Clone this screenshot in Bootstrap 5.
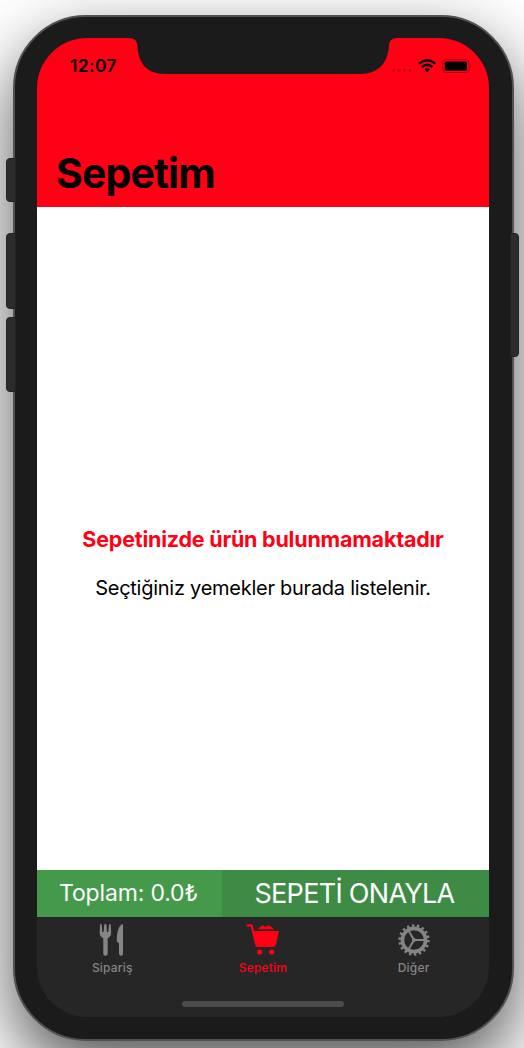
<!DOCTYPE html>
<html lang="tr">
<head>
<meta charset="utf-8">
<meta name="viewport" content="width=device-width, initial-scale=1">
<title>Sepetim</title>
<link href="https://cdn.jsdelivr.net/npm/bootstrap@5.3.0/dist/css/bootstrap.min.css" rel="stylesheet">
<style>
body{width:524px;height:1048px;background:#fff;font-family:Inter,"Liberation Sans",sans-serif;color:#000}
.phone{width:501px;height:1026px;margin:15px 0 0 13px;padding:21px 22px 21px;background:#1b1b1b;border:2px solid #505252;border-radius:73px;box-shadow:0 28px 68px rgba(0,0,0,.68)}
.side-key{position:absolute;width:10px;background:#2c2c2c;border:1px solid #222;border-radius:4px 0 0 4px;left:6px}
.side-key.power{left:510px;width:9px;border-radius:0 4px 4px 0}
.screen{width:452px;height:979px;border-radius:50px}
.top-area{height:169px;background:#ff0015}
.notch{position:absolute;left:90px;top:0}
.status{height:56px;padding:0 18px 0 33px}
.clock{font-size:17.500px;font-weight:600;line-height:20px;letter-spacing:.35px}
.title-lg{font-size:41px;font-weight:700;line-height:48px;letter-spacing:-.9px;margin:55px 0 0 19px}
.empty-area{padding-top:48px}
.empty-title{font-size:21.500px;font-weight:700;line-height:26px;letter-spacing:-.22px;color:#ff0015}
.empty-text{font-size:20px;line-height:24px;letter-spacing:-.26px}
.pay{height:47px;color:#fff}
.total{width:185px;background:#449a4a;font-size:23px;letter-spacing:-.15px;padding-right:2px}
.confirm{background:#3e8b45;font-size:27px;letter-spacing:-.7px;padding:1px 2px 0 0}
.tabs{height:100px;background:#262626;color:#858585}
.tab-label{font-size:12px;font-weight:500;line-height:14px;letter-spacing:.2px}
.tab-on{color:#ff0015}
.home-bar{width:162px;height:6px;border-radius:3px;background:#4b4b4b;margin-bottom:10px}
span,div{white-space:nowrap}
</style>
</head>
<body class="position-relative overflow-hidden">
<div class="phone">
  <main class="screen d-flex flex-column overflow-hidden position-relative">
    <header class="top-area">
      <div class="status d-flex align-items-center justify-content-between">
        <span class="clock">12:07</span>
        <svg width="84" height="20" viewBox="0 0 84 20" style="margin-right:-2px">
          <g fill="#c9000f"><circle cx="4.500" cy="14.500" r="1.700"/><circle cx="10" cy="14.500" r="1.700"/><circle cx="15.500" cy="14.500" r="1.700"/><circle cx="21" cy="14.500" r="1.700"/></g>
          <g fill="none" stroke="#000" stroke-width="2.500"><path d="M30 7.600Q38.200 .800 46.400 7.600M33 11Q38.200 6.500 43.400 11"/></g>
          <path d="M35.600 13.500Q38.200 11.200 40.800 13.500L38.200 16.200Z"/>
          <rect x="53.700" y="3.700" width="26.400" height="12.800" rx="3.600" fill="none" stroke="#b0000e"/>
          <rect x="55.700" y="5.500" width="22.300" height="9.200" rx="1.700"/>
          <path d="M81.300 8Q83.300 10 81.300 12Z" fill="#a0000d"/>
        </svg>
      </div>
      <h1 class="title-lg">Sepetim</h1>
    </header>
    <svg class="notch" width="274" height="37" viewBox="0 0 274 37"><path d="M0 0H2Q10 0 10.500 8C11 25 20 36 38 36H233C251 36 261 25 262 8Q262 0 270 0H272Z" fill="#1b1b1b"/></svg>
    <section class="empty-area bg-white flex-grow-1 d-flex flex-column align-items-center justify-content-center">
      <div class="empty-title">Sepetinizde ürün bulunmamaktadır</div>
      <div class="empty-text mt-4">Seçtiğiniz yemekler burada listelenir.</div>
    </section>
    <div class="pay d-flex">
      <div class="total d-flex align-items-center justify-content-center"><span>Toplam: 0.0₺</span></div>
      <div class="confirm flex-grow-1 d-flex align-items-center justify-content-center"><span>SEPETİ ONAYLA</span></div>
    </div>
    <nav class="tabs d-flex flex-column align-items-center justify-content-between">
      <div class="row g-0 w-100 text-center">
        <div class="col-4 d-flex flex-column align-items-center">
          <svg width="40" height="44" viewBox="0 0 40 44" fill="#858585"><path d="M8 7.500Q8.900 6.500 9.700 7.500L10.300 15H11.600L12.200 7.500Q13.300 6.500 14.400 7.500L15 15H16.300L17 7.500Q17.800 6.500 18.700 7.500L19.200 15.500Q19.200 19.500 15.700 21.200V36.500Q15.700 38.800 13.500 38.800T11.300 36.500V21.200Q7.600 19.500 7.600 15.500Z"/><path d="M31 7V36.500Q31 38.800 29 38.800T27 36.500V26Q24.800 25.600 24.800 22.500C25 14 27 8 31 7Z"/></svg>
          <span class="tab-label">Sipariş</span>
        </div>
        <div class="col-4 d-flex flex-column align-items-center tab-on">
          <svg width="40" height="44" viewBox="0 0 40 44" fill="#ff0015"><path d="M4.300 8.300H8.500L13.500 28.500" fill="none" stroke="#ff0015" stroke-width="2.300" stroke-linecap="round" stroke-linejoin="round"/><path d="M10 14H36L33 27.500Q32.400 30 29.800 30H15.500Q13.300 30 12.700 27.500Z"/><path d="M14.500 12.300L18.700 8.800Q20.500 7.600 22 9.800L23.200 9.800Q25.200 7.300 27 8.800L31.300 12.300Z"/><circle cx="16.600" cy="35" r="2.600"/><circle cx="28.700" cy="35" r="2.600"/></svg>
          <span class="tab-label">Sepetim</span>
        </div>
        <div class="col-4 d-flex flex-column align-items-center">
          <svg width="40" height="44" viewBox="-20 -23 40 44" fill="none" stroke="#858585"><circle r="11.600" stroke-width="3.600"/><circle r="14.400" stroke-width="2.600" stroke-dasharray="2.400 2.627"/><path d="M0 0H11M0 0L-5.500-9.500M0 0L-5.500 9.500" stroke-width="2"/><circle r="1.500" fill="#858585"/></svg>
          <span class="tab-label">Diğer</span>
        </div>
      </div>
      <div class="home-bar"></div>
    </nav>
  </main>
</div>
<i class="side-key" style="top:158px;height:44px"></i>
<i class="side-key" style="top:233px;height:76px"></i>
<i class="side-key" style="top:317px;height:75px"></i>
<i class="side-key power" style="top:233px;height:124px"></i>
<script src="https://cdn.jsdelivr.net/npm/bootstrap@5.3.0/dist/js/bootstrap.bundle.min.js"></script>
</body>
</html>
